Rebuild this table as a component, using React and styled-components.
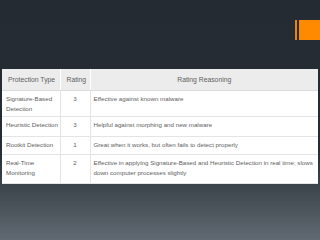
import styled, { createGlobalStyle } from "styled-components";

const GlobalStyle = createGlobalStyle`
  html, body {
    margin: 0;
    padding: 0;
  }
  body {
    font-family: "Liberation Sans", Arial, sans-serif;
  }
`;

const Slide = styled.div`
  width: 320px;
  height: 240px;
  display: flex;
  flex-direction: column;
  background: linear-gradient(to bottom, #252b33 0%, #262c34 62%, #3b434b 77%, #616972 100%);
  overflow: hidden;
`;

const AccentRow = styled.div`
  display: flex;
  justify-content: flex-end;
  gap: 2px;
  margin-top: 20px;
  height: 20px;
`;

const AccentStripe = styled.div`
  width: 2px;
  background: #f08400;
`;

const AccentBlock = styled.div`
  width: 21px;
  background: #ff8a00;
`;

const Table = styled.table`
  margin: 29px 2px 0 2px;
  width: 316px;
  border-collapse: collapse;
  table-layout: fixed;
  background: #ffffff;
  font-size: 6.2px;
  color: #5e5e5e;
`;

const HeadCell = styled.th`
  background: #ececec;
  font-weight: normal;
  font-size: 6.8px;
  height: 21px;
  padding: 0 6px;
  text-align: ${(p) => (p.center ? "center" : "left")};
  border-left: 1px solid #ffffff;
  border-bottom: 1px solid #dcdcdc;
  white-space: nowrap;
  &:first-child {
    border-left: none;
  }
`;

const Cell = styled.td`
  padding: 3px 0 0 ${(p) => (p.center ? 0 : 3)}px;
  vertical-align: top;
  line-height: 10px;
  height: ${(p) => p.h}px;
  box-sizing: border-box;
  text-align: ${(p) => (p.center ? "center" : "left")};
  border-left: 1px solid #e4e4e4;
  border-bottom: 1px solid #e4e4e4;
  &:first-child {
    border-left: none;
    padding-left: 4px;
  }
`;

const rows = [
  { type: "Signature-Based Detection", rating: 3, reason: "Effective against known malware", h: 26 },
  { type: "Heuristic Detection", rating: 3, reason: "Helpful against morphing and new malware", h: 20 },
  { type: "Rootkit Detection", rating: 1, reason: "Great when it works, but often fails to detect properly", h: 18 },
  {
    type: "Real-Time Monitoring",
    rating: 2,
    reason: "Effective in applying Signature-Based and Heuristic Detection in real time; slows down computer processes slightly",
    h: 29,
  },
];

const App = () => {
  return (
    <Slide>
      <GlobalStyle />
      <AccentRow>
        <AccentStripe />
        <AccentBlock />
      </AccentRow>
      <Table>
        <colgroup>
          <col style={{ width: 58 }} />
          <col style={{ width: 30 }} />
          <col />
        </colgroup>
        <thead>
          <tr>
            <HeadCell>Protection Type</HeadCell>
            <HeadCell>Rating</HeadCell>
            <HeadCell center>Rating Reasoning</HeadCell>
          </tr>
        </thead>
        <tbody>
          {rows.map((r) => (
            <tr key={r.type}>
              <Cell h={r.h}>{r.type}</Cell>
              <Cell h={r.h} center>{r.rating}</Cell>
              <Cell h={r.h}>{r.reason}</Cell>
            </tr>
          ))}
        </tbody>
      </Table>
    </Slide>
  );
};

export default App;
